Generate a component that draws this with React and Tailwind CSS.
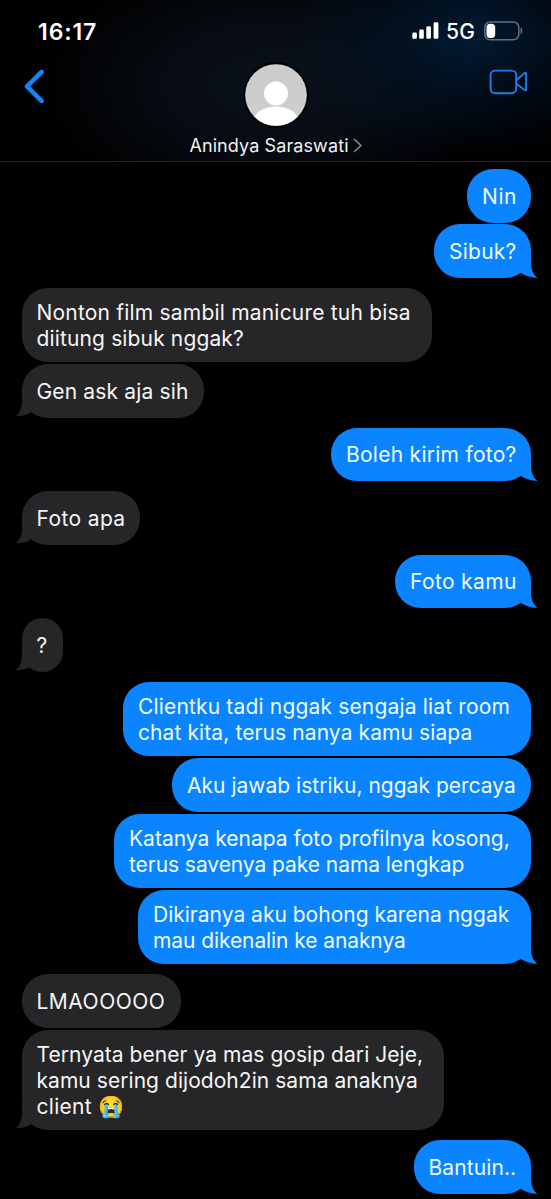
const groups = [
  {
    from: 'me',
    bubbles: [
      { width: 'w-[64px]', lines: [['Nin', 'tracking-[0.6px]']] },
      { width: 'w-[97px]', lines: [['Sibuk?', 'tracking-[0.25px]']] },
    ],
  },
  {
    from: 'them',
    bubbles: [
      {
        width: 'w-[410px]',
        lines: [
          ['Nonton film sambil manicure tuh bisa', 'tracking-[0.2px]'],
          ['diitung sibuk nggak?', 'tracking-[0.14px]'],
        ],
      },
      { width: 'w-[182px]', lines: [['Gen ask aja sih', 'tracking-[0.16px]']] },
    ],
  },
  { from: 'me', bubbles: [{ width: 'w-[200px]', lines: [['Boleh kirim foto?', 'tracking-[0.27px]']] }] },
  { from: 'them', bubbles: [{ width: 'w-[118.5px]', lines: [['Foto apa', 'tracking-[0.38px]']] }] },
  { from: 'me', bubbles: [{ width: 'w-[136px]', lines: [['Foto kamu', 'tracking-[0.36px]']] }] },
  { from: 'them', bubbles: [{ width: 'w-[41.5px]', lines: [['?', 'tracking-normal']] }] },
  {
    from: 'me',
    bubbles: [
      {
        width: 'w-[408px]',
        lines: [
          ['Clientku tadi nggak sengaja liat room', 'tracking-[0.165px]'],
          ['chat kita, terus nanya kamu siapa', 'tracking-[0.1px]'],
        ],
      },
      { width: 'w-[359px]', lines: [['Aku jawab istriku, nggak percaya', 'tracking-[0.011px]']] },
      {
        width: 'w-[417px]',
        lines: [
          ['Katanya kenapa foto profilnya kosong,', 'tracking-[0.01px]'],
          ['terus savenya pake nama lengkap', 'tracking-[-0.06px]'],
        ],
      },
      {
        width: 'w-[393px]',
        lines: [
          ['Dikiranya aku bohong karena nggak', 'tracking-[0.005px]'],
          ['mau dikenalin ke anaknya', 'tracking-[-0.085px]'],
        ],
      },
    ],
  },
  {
    from: 'them',
    bubbles: [
      { width: 'w-[159px]', lines: [['LMAOOOOO', 'tracking-[0.5px]']] },
      {
        width: 'w-[422px]',
        lines: [
          ['Ternyata bener ya mas gosip dari Jeje,', 'tracking-[0.05px]'],
          ['kamu sering dijodoh2in sama anaknya', 'tracking-[0.05px]'],
          ['client 😭', 'tracking-[0.3px]'],
        ],
      },
    ],
  },
  { from: 'me', bubbles: [{ width: 'w-[117.5px]', lines: [['Bantuin..', 'tracking-[0.1px]']] }] },
];

function Tail({ mine }) {
  return mine ? (
    <svg className="absolute -right-[7px] bottom-0" width="27" height="27" viewBox="0 0 27 27" fill="#0b84ff">
      <path d="M20 0V11C20 18 22 23.500 26.500 26.900C20.500 26.800 14.500 25 10 22L5 5Z" />
    </svg>
  ) : (
    <svg className="absolute -left-[7px] bottom-0" width="27" height="27" viewBox="0 0 27 27" fill="#262628">
      <path d="M7 0V10C7 17 5 22 0.700 25.300C6.500 25.400 12 24 16.500 21L22 5Z" />
    </svg>
  );
}

function Bubble({ mine, width, lines, tail }) {
  return (
    <div
      className={`relative flex min-h-[53.5px] flex-col justify-center rounded-[26px] pt-[12.15px] pb-[10.35px] pl-[15px] ${width} ${
        mine ? 'self-end bg-[#0b84ff]' : 'self-start bg-[#262628]'
      }`}
    >
      {tail && <Tail mine={mine} />}
      {lines.map(([text, tracking]) => (
        <p key={text} className={`relative h-[26px] text-[21px] leading-[26px] whitespace-nowrap ${mine ? 'text-[#eefaff]' : 'text-[#f5f5f5]'} ${tracking}`}>
          {text}
        </p>
      ))}
    </div>
  );
}

function StatusBar() {
  return (
    <div className="flex h-[62px] items-center justify-between pr-[28px] pl-[38px]">
      <span className="pt-[2px] text-[23px] font-semibold tracking-[0.9px]">16:17</span>
      <div className="flex items-center">
        <svg width="27" height="18" viewBox="0 0 27 18" fill="#fff">
          <rect x="0.300" y="10.500" width="4.600" height="6.300" rx="1.400" />
          <rect x="7.200" y="7.500" width="4.600" height="9.300" rx="1.400" />
          <rect x="14.300" y="4.200" width="4.600" height="12.600" rx="1.400" />
          <rect x="21.600" y="0.300" width="4.800" height="16.500" rx="1.400" />
        </svg>
        <span className="ml-[7px] w-[30px] pt-[2px] text-[21px] font-medium tracking-[0.2px]">5G</span>
        <svg className="ml-[8px]" width="39" height="20" viewBox="0 0 39 20" fill="none">
          <rect x="0.800" y="1" width="34" height="17.800" rx="5.500" stroke="#686f78" strokeWidth="1.500" />
          <rect x="2.500" y="2.800" width="8.700" height="14.200" rx="3.800" fill="#fff" />
          <path d="M36.500 6.500C38.900 7.600 38.900 12.200 36.500 13.300Z" fill="#686f78" />
        </svg>
      </div>
    </div>
  );
}

function NavBar() {
  return (
    <div className="flex h-[99px] justify-between">
      <button className="flex w-[90px] pt-[6px] pl-[23px]" aria-label="Back">
        <svg width="24" height="36" viewBox="0 0 24 36" fill="none" stroke="#1284f7" strokeWidth="4.600" strokeLinecap="round" strokeLinejoin="round">
          <path d="M18.600 4L4 18.400L18.600 32.800" />
        </svg>
      </button>
      <div className="flex flex-col items-center">
        <svg width="66" height="66" viewBox="0 0 66 66">
          <clipPath id="avatar">
            <circle cx="33" cy="33" r="30.800" />
          </clipPath>
          <circle cx="33" cy="33" r="33" fill="#020305" />
          <g clipPath="url(#avatar)">
            <rect width="66" height="66" fill="#cdcdcd" />
            <circle cx="33" cy="31.500" r="12" fill="#fff" />
            <ellipse cx="33" cy="60" rx="23" ry="15.500" fill="#fff" />
          </g>
        </svg>
        <div className="mt-[5px] flex items-center pl-[1px]">
          <span className="pt-[1px] text-[18px] leading-[24px] tracking-[0.1px] whitespace-nowrap text-[#f2f2f2]">Anindya Saraswati</span>
          <svg className="ml-[4px]" width="10" height="16" viewBox="0 0 10 16" fill="none" stroke="#85878b" strokeWidth="1.700" strokeLinecap="round" strokeLinejoin="round">
            <path d="M1.500 1.500L8 7.500L1.500 13.500" />
          </svg>
        </div>
      </div>
      <button className="flex w-[90px] justify-end pt-[6px] pr-[23px]" aria-label="Video call">
        <svg width="40" height="28" viewBox="0 0 40 28" fill="none" stroke="#1f7fe6" strokeWidth="1.900" strokeLinejoin="round">
          <rect x="2.600" y="2.600" width="25.600" height="22.600" rx="4.500" />
          <path d="M28.400 12.300L36.600 5Q38.100 4.200 38.100 5.800V21.200Q38.100 22.800 36.600 22L28.400 15.700" />
        </svg>
      </button>
    </div>
  );
}

export default function App() {
  return (
    <div className="h-[1199px] w-[551px] overflow-hidden bg-black font-['Inter','Noto_Sans',sans-serif] text-white">
      <header className="h-[162px] border-b border-[#242527] bg-[radial-gradient(ellipse_190px_120px_at_470px_38px,#031a33_0%,#02142999_45%,transparent_100%),radial-gradient(ellipse_230px_130px_at_270px_85px,#0a1119_0%,#070c13_45%,transparent_100%)]">
        <StatusBar />
        <NavBar />
      </header>
      <main className="flex flex-col gap-[10px] pt-[7px] pr-[20px] pl-[21.5px]">
        {groups.map(({ from, bubbles }, g) => (
          <section key={g} className="flex flex-col gap-[1.9px]">
            {bubbles.map((b, i) => (
              <Bubble key={i} {...b} mine={from === 'me'} tail={i === bubbles.length - 1} />
            ))}
          </section>
        ))}
      </main>
    </div>
  );
}
